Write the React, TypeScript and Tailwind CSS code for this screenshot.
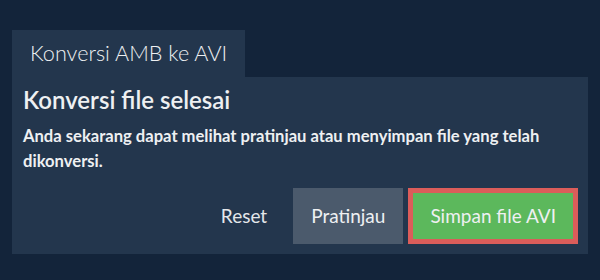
export default function App() {
  return (
    <div className="min-h-[280px] bg-[#13243a] px-3 pt-[30px] font-['Lato','Liberation_Sans',sans-serif] text-[#eef0f2]">
      {/* TAB */}
      <div className="inline-flex h-[47px] items-center bg-[#23364d] px-[18px] text-[21.6px] font-light">
        Konversi AMB ke AVI
      </div>

      {/* PANEL */}
      <div className="bg-[#23364d] pb-[10px] pl-[11px] pr-[10px] pt-[9px]">
        <h2 className="text-[24px] leading-[1.2] font-semibold">Konversi file selesai</h2>
        <p className="mt-[9px] text-[16.6px] leading-[25px] font-bold">
          Anda sekarang dapat melihat pratinjau atau menyimpan file yang telah dikonversi.
        </p>

        <div className="mt-[14px] flex items-center justify-end gap-[5px]">
          <button className="h-[56px] px-[21px] text-[19px] text-[#e4e7ea]">Reset</button>
          <button className="h-[56px] bg-[#4b5a6c] px-[18px] text-[19px]">Pratinjau</button>
          <button className="h-[56px] border-[5px] border-[#db5d5a] bg-[#5cb85c] px-[17px] text-[19px]">
            Simpan file AVI
          </button>
        </div>
      </div>
    </div>
  )
}
